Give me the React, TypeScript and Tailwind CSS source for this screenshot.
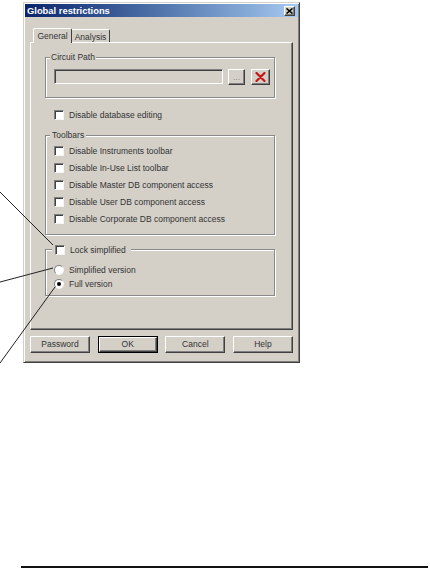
import React from "react";

const raised =
  "bg-[#d4d0c8] border border-t-white border-l-white border-b-[#404040] border-r-[#404040] shadow-[inset_-1px_-1px_0_#808080]";

function Check({ label }: { label?: string }) {
  return (
    <div className="flex items-center gap-[5px] h-[10px]">
      <div className="w-[10px] h-[10px] bg-white border border-t-[#808080] border-l-[#808080] border-b-[#f4f4f4] border-r-[#f4f4f4] shadow-[inset_1px_1px_0_#404040]" />
      {label && <span className="leading-[10px] whitespace-nowrap">{label}</span>}
    </div>
  );
}

function Radio({ label, on }: { label: string; on?: boolean }) {
  return (
    <div className="flex items-center gap-[5px] h-[10px]">
      <div className="w-[10px] h-[10px] rounded-full bg-white border border-t-[#808080] border-l-[#808080] border-b-[#f4f4f4] border-r-[#f4f4f4] flex items-center justify-center">
        {on && <div className="w-[4px] h-[4px] rounded-full bg-black" />}
      </div>
      <span className="leading-[10px] whitespace-nowrap">{label}</span>
    </div>
  );
}

function Btn({ children, def }: { children: React.ReactNode; def?: boolean }) {
  return (
    <div className={def ? "w-[60px] h-[17px] border border-black" : "w-[60px] h-[17px]"}>
      <div className={`${raised} w-full h-full flex items-center justify-center leading-none`}>
        {children}
      </div>
    </div>
  );
}

export default function App() {
  return (
    <div className="relative w-[430px] h-[569px] bg-white overflow-hidden font-['Liberation_Sans','Arial',sans-serif] text-[8.5px] text-[#333333]">
      <div className="pt-[2px] pl-[23px]">
        <div className="w-[277px] h-[361px] bg-[#d4d0c8] border border-t-[#d4d0c8] border-l-[#d4d0c8] border-b-[#404040] border-r-[#404040] shadow-[inset_1px_1px_0_#fff,inset_-1px_-1px_0_#808080] p-[1px] flex flex-col">
          {/* title bar */}
          <div className="h-[13px] bg-linear-to-r from-[#0a246a] to-[#a6caf0] flex items-center justify-between pl-[2px] pr-[3px]">
            <span className="text-white font-bold text-[9.4px] leading-none">Global restrictions</span>
            <div className={`${raised} w-[11px] h-[10px] flex items-center justify-center`}>
              <svg width="7" height="6" viewBox="0 0 7 6">
                <path d="M0.5 0.5 L6.5 5.5 M6.5 0.5 L0.5 5.5" stroke="#000" strokeWidth="1.6" />
              </svg>
            </div>
          </div>

          <div className="px-[5px] flex flex-col">
            {/* tabs */}
            <div className="mt-[11px] h-[15px] flex items-end pl-[3px]">
              <div className="relative z-10 w-[39px] h-[15px] bg-[#d4d0c8] border-t border-l border-r border-t-white border-l-white border-r-[#404040] rounded-t-[2px] flex justify-center pt-[2px] leading-[10px]">
                General
              </div>
              <div className="w-[38px] h-[14px] bg-[#d4d0c8] border-t border-r border-t-white border-r-[#404040] rounded-tr-[2px] flex justify-center pt-[2px] leading-[10px]">
                Analysis
              </div>
            </div>

            {/* panel */}
            <div className="-mt-[1px] h-[288px] border border-t-white border-l-white border-r-[#404040] border-b-[#404040] shadow-[inset_-1px_-1px_0_#808080] pt-[14px] pl-[14px] pr-[17px] flex flex-col">
              {/* Circuit Path */}
              <div className="relative h-[41px] border border-[#8a8a8a] shadow-[inset_1px_1px_0_#fff,1px_1px_0_#fff] pt-[11px] pl-[8px] flex items-start">
                <span className="absolute -top-[6px] left-[4px] px-[1px] bg-[#d4d0c8] leading-[11px]">Circuit Path</span>
                <div className="w-[169px] h-[15px] bg-[#d4d0c8] border border-t-[#808080] border-l-[#808080] border-b-white border-r-white shadow-[inset_1px_1px_0_#404040]" />
                <div className={`${raised} ml-[5px] w-[17px] h-[16px] flex items-end justify-center pb-[3px] text-[#8a8a8a] leading-none`}>
                  ...
                </div>
                <div className={`${raised} ml-[6px] w-[19px] h-[16px] flex items-center justify-center`}>
                  <svg width="11" height="10" viewBox="0 0 11 10">
                    <path d="M1.5 1 L9.5 9 M9.5 1 L1.5 9" stroke="#c81414" strokeWidth="2.2" strokeLinecap="round" />
                  </svg>
                </div>
              </div>

              <div className="mt-[12px] pl-[9px]">
                <Check label="Disable database editing" />
              </div>

              {/* Toolbars */}
              <div className="relative mt-[15px] h-[100px] border border-[#8a8a8a] shadow-[inset_1px_1px_0_#fff,1px_1px_0_#fff] pt-[10px] pl-[8px] flex flex-col gap-[7px]">
                <span className="absolute -top-[6px] left-[4px] px-[2px] bg-[#d4d0c8] leading-[11px]">Toolbars</span>
                <Check label="Disable Instruments toolbar" />
                <Check label="Disable In-Use List toolbar" />
                <Check label="Disable Master DB component access" />
                <Check label="Disable User DB component access" />
                <Check label="Disable Corporate DB component access" />
              </div>

              {/* Lock simplified */}
              <div className="relative mt-[14px] h-[47px] border border-[#8a8a8a] shadow-[inset_1px_1px_0_#fff,1px_1px_0_#fff] pt-[15px] pl-[8px] flex flex-col gap-[4px]">
                <div className="absolute -top-[6px] left-[6px] px-[3px] bg-[#d4d0c8] h-[11px] flex items-center pr-[5px]">
                  <Check label="Lock simplified" />
                </div>
                <Radio label="Simplified version" />
                <Radio label="Full version" on />
              </div>
            </div>

            {/* buttons */}
            <div className="mt-[6px] flex justify-between">
              <Btn>Password</Btn>
              <Btn def>OK</Btn>
              <Btn>Cancel</Btn>
              <Btn>Help</Btn>
            </div>
          </div>
        </div>
      </div>

      <div className="mt-[203px] ml-[21px] w-[407px] h-[2px] bg-[#111]" />

      {/* callout lines */}
      <svg className="absolute inset-0 pointer-events-none" width="430" height="569" viewBox="0 0 430 569">
        <line x1="0" y1="192" x2="53" y2="245" stroke="#222" strokeWidth="1" />
        <line x1="0" y1="282" x2="53" y2="268" stroke="#222" strokeWidth="1" />
        <line x1="0" y1="363" x2="55" y2="287" stroke="#222" strokeWidth="1" />
      </svg>
    </div>
  );
}
